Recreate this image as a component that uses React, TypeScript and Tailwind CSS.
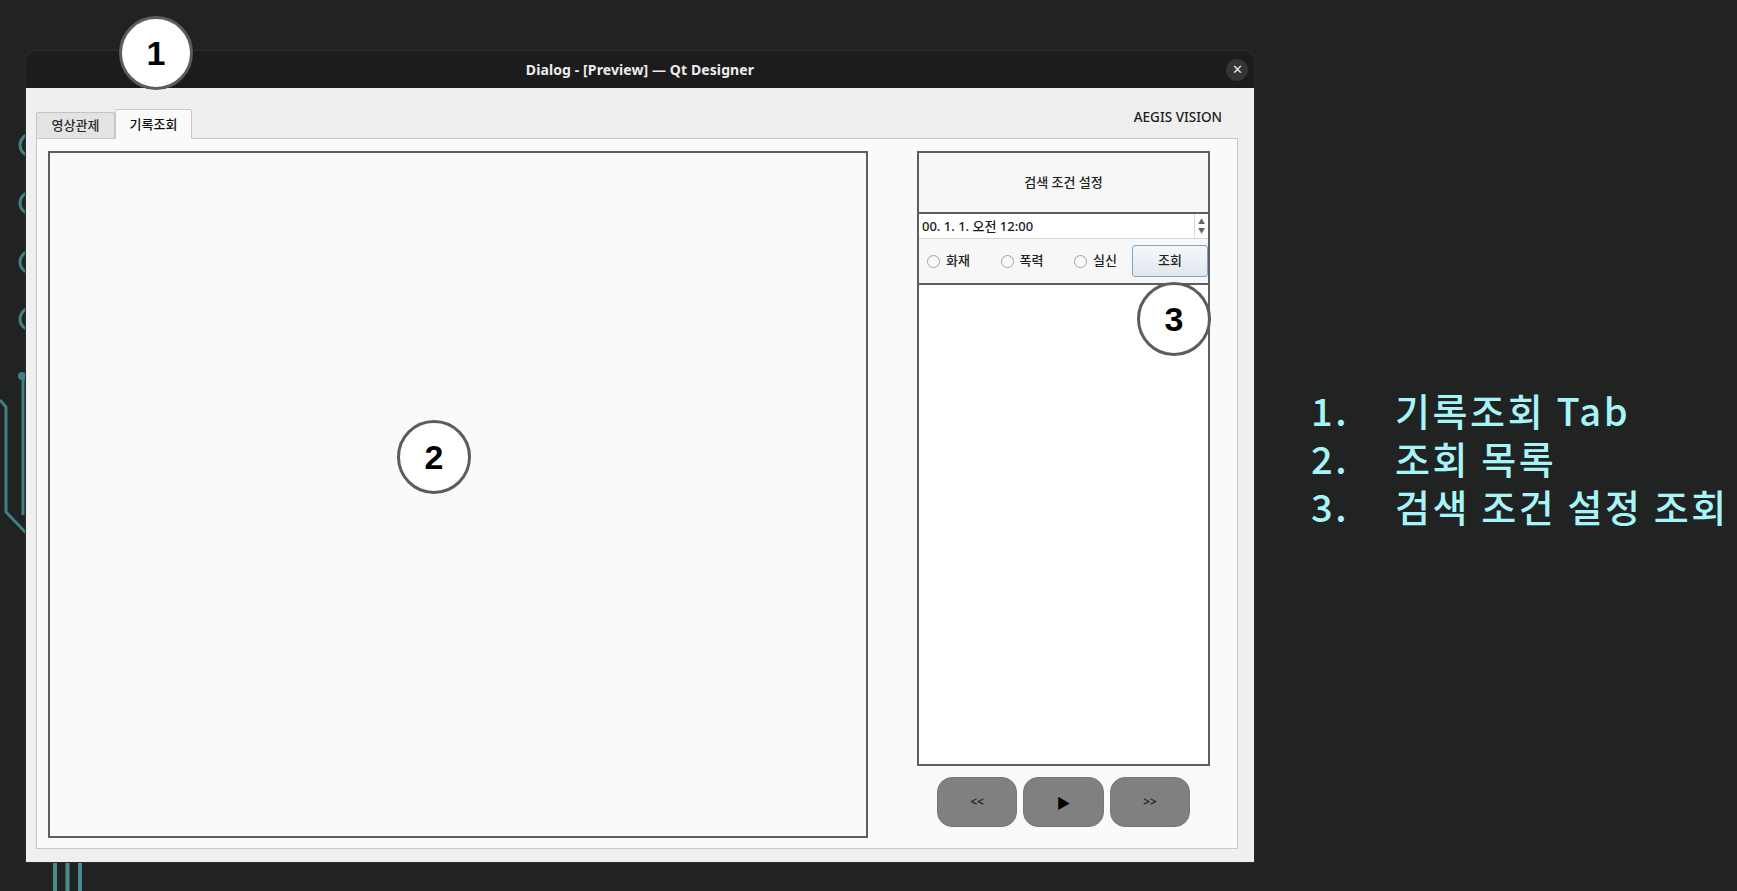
import React from "react";

const teal = "#3f8185";

function Decor() {
  return (
    <svg
      className="absolute left-0 top-0 pointer-events-none"
      width={1737}
      height={891}
      viewBox="0 0 1737 891"
    >
      {[145, 203, 262, 319].map((cy) => (
        <circle key={cy} cx={31} cy={cy} r={11} stroke={teal} strokeWidth={3} fill="none" />
      ))}
      <circle cx={22} cy={376} r={4} fill={teal} />
      <line x1={23} y1={376} x2={23} y2={515} stroke={teal} strokeWidth={3} />
      <polyline points="0,400 6,407 6,512 28,535" stroke={teal} strokeWidth={3} fill="none" />
      <rect x={53} y={860} width={4} height={31} fill="#4a8d90" />
      <rect x={65.5} y={860} width={4} height={31} fill="#4a8d90" />
      <rect x={78} y={860} width={4} height={31} fill="#4a8d90" />
    </svg>
  );
}

function Marker({ n, className }: { n: string; className: string }) {
  return (
    <div
      className={
        "absolute w-[74px] h-[74px] rounded-full bg-white border-[3px] border-[#5c5c5c] flex items-center justify-center text-[34px] font-bold text-black " +
        className
      }
      style={{ fontFamily: "'Liberation Sans', Arial, sans-serif" }}
    >
      {n}
    </div>
  );
}

function Radio({ label, w }: { label: string; w: string }) {
  return (
    <div className={"flex items-center gap-[6px] shrink-0 " + w}>
      <span className="w-[13px] h-[13px] rounded-full border border-[#a0a0a0] bg-gradient-to-b from-[#f4f4f4] to-white" />
      <span className="text-[13px] font-medium text-[#222]">{label}</span>
    </div>
  );
}

export default function App() {
  const ui = { fontFamily: "'Noto Sans', 'Noto Sans CJK KR', sans-serif" };
  return (
    <div className="relative w-[1737px] h-[891px] bg-[#212322] overflow-hidden" style={ui}>
      <Decor />
      <div className="flex items-center pt-[51px] pl-[26px]">
        {/* window */}
        <div className="relative w-[1228px] h-[811px] flex flex-col rounded-t-[10px] overflow-hidden shadow-[0_0_0_1px_#2c2c2c]">
          <div className="h-[37px] bg-[#1c1c1c] grid grid-cols-[1fr_auto_1fr] items-center">
            <div />
            <div className="text-[14px] font-bold text-[#ececec] tracking-[0.1px]">
              Dialog - [Preview] — Qt Designer
            </div>
            <div className="flex justify-end pr-[6px]">
              <div className="w-[22px] h-[22px] rounded-full bg-[#353535] flex items-center justify-center text-[#e6e6e6] text-[13px] leading-none">
                ✕
              </div>
            </div>
          </div>
          <div className="flex-1 bg-[#efefef] flex flex-col">
            {/* tab row */}
            <div className="h-[50px] flex items-end justify-between pl-[10px]">
              <div className="flex items-end">
                <div className="w-[79px] h-[26px] bg-[#e3e3e3] border border-[#c4c4c4] border-b-0 rounded-t-[2px] flex items-center justify-center text-[13px] font-medium text-[#2a2a2a]">
                  영상관제
                </div>
                <div className="w-[77px] h-[30px] bg-[#fafafa] border border-[#c8c8c8] border-b-0 rounded-t-[2px] flex items-center justify-center text-[13px] font-medium text-[#111] relative top-[1px]">
                  기록조회
                </div>
              </div>
              <div className="mb-[11px] mr-[32px] text-[13.5px] font-medium text-[#1c1c1c]">AEGIS VISION</div>
            </div>
            {/* tab pane */}
            <div className="ml-[10px] mr-[16px] h-[711px] bg-[#fafafa] border border-[#c8c8c8] pl-[11px] pr-[27px] pt-[12px] pb-[10px] flex gap-[49px]">
              <div className="w-[820px] h-full border-2 border-[#5e5e5e] bg-[#fafafa]" />
              <div className="w-[293px] flex flex-col">
                <div className="h-[615px] border-2 border-[#5e5e5e] flex flex-col bg-[#f7f7f7]">
                  <div className="h-[61px] flex items-center justify-center text-[13px] font-medium text-[#222] border-b-2 border-[#5e5e5e]">
                    검색 조건 설정
                  </div>
                  <div className="h-[25px] bg-white flex items-center border-b border-[#d6d6d6]">
                    <div className="flex-1 pl-[3px] pt-[2px] text-[13px] font-medium text-[#1a1a1a]">00. 1. 1. 오전 12:00</div>
                    <div className="w-[14px] h-full border-l border-[#dcdcdc] flex flex-col items-center justify-center text-[7px] leading-[9px] text-[#666]">
                      <span>▲</span>
                      <span>▼</span>
                    </div>
                  </div>
                  <div className="h-[46px] flex items-center pl-[8px] border-b-2 border-[#5e5e5e]">
                    <Radio label="화재" w="w-[73.5px]" />
                    <Radio label="폭력" w="w-[73.5px]" />
                    <Radio label="실신" w="w-[58px]" />
                    <div className="w-[76px] h-[32px] rounded-[3px] border border-[#7fa3c8] bg-gradient-to-b from-[#f6f7f9] to-[#e2e7ee] flex items-center justify-center text-[13px] font-medium text-[#222]">
                      조회
                    </div>
                  </div>
                  <div className="flex-1 bg-white" />
                </div>
                <div className="mt-[11px] flex justify-center gap-[6px]">
                  <div className="w-[80px] h-[50px] rounded-[15px] bg-[#808080] border border-[#777] flex items-center justify-center text-[12px] font-bold text-[#2a2a2a]">
                    &lt;&lt;
                  </div>
                  <div className="w-[81px] h-[50px] rounded-[15px] bg-[#808080] border border-[#777] flex items-center justify-center text-[14px] text-black">
                    ▶
                  </div>
                  <div className="w-[80px] h-[50px] rounded-[15px] bg-[#808080] border border-[#777] flex items-center justify-center text-[12px] font-bold text-[#2a2a2a]">
                    &gt;&gt;
                  </div>
                </div>
              </div>
            </div>
          </div>
        </div>
        {/* legend */}
        <div
          className="ml-[57px] mt-[2px] grid grid-cols-[84px_auto] text-[38px] font-medium leading-[48px] tracking-[2.6px] text-[#a8f5f9]"
          style={{ fontFamily: "'Noto Sans CJK KR', 'Noto Sans', sans-serif" }}
        >
          <span>1.</span>
          <span>기록조회 Tab</span>
          <span>2.</span>
          <span>조회 목록</span>
          <span>3.</span>
          <span>검색 조건 설정 조회</span>
        </div>
      </div>
      <Marker n="1" className="left-[119px] top-[16px]" />
      <Marker n="2" className="left-[397px] top-[420px]" />
      <Marker n="3" className="left-[1137px] top-[282px]" />
    </div>
  );
}
